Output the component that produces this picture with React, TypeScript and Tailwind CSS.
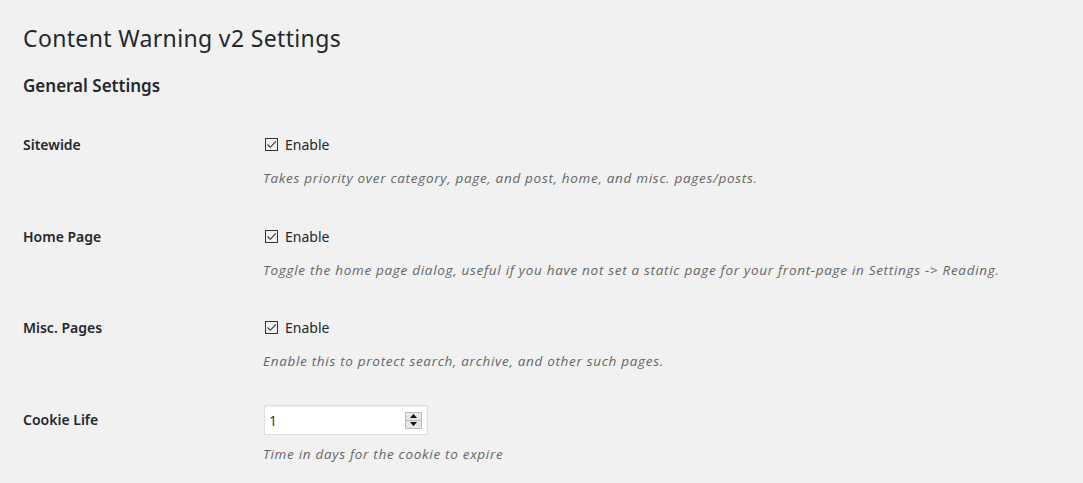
import type { ReactNode } from "react";

const font = { fontFamily: '"Noto Sans", "Open Sans", sans-serif' };
const italic = { fontFamily: '"Open Sans", "Noto Sans", sans-serif' };

function Checkbox() {
  return (
    <span className="inline-flex h-[13px] w-[13px] shrink-0 items-center justify-center border border-[#333] bg-[#f1f1f1]">
      <svg viewBox="0 0 11 11" className="h-[11px] w-[11px]" fill="none" stroke="#333" strokeWidth="1.1">
        <path d="M1.5 5.5 L4.3 8.3 L9.8 2.3" />
      </svg>
    </span>
  );
}

function Row({ label, children, labelClass = "" }: { label: string; children: ReactNode; labelClass?: string }) {
  return (
    <div className="flex">
      <div className={"w-[240px] shrink-0 text-[14px] font-semibold leading-5 text-[#23282d] " + labelClass}>{label}</div>
      <div className="flex-1">{children}</div>
    </div>
  );
}

function Desc({ children, className = "" }: { children: ReactNode; className?: string }) {
  return (
    <p className={"text-[13.5px] italic leading-5 tracking-[0.7px] text-[#666] " + className} style={italic}>
      {children}
    </p>
  );
}

function Enable({ desc }: { desc: string }) {
  return (
    <>
      <label className="flex h-5 items-center gap-[7px] text-[14px] leading-5 text-[#23282d]">
        <span className="ml-[2px]">
          <Checkbox />
        </span>
        Enable
      </label>
      <Desc className="mt-[13px]">{desc}</Desc>
    </>
  );
}

export default function App() {
  return (
    <div className="min-h-[483px] w-full bg-[#f1f1f1] px-[23px] pt-6" style={font}>
      <h1 className="text-[23px] font-normal leading-[29px] tracking-[0.35px] text-[#23282d]">Content Warning v2 Settings</h1>
      <h2 className="mt-[21px] text-[17px] font-semibold leading-6 text-[#23282d]">General Settings</h2>

      <div className="mt-[37px] flex flex-col">
        <Row label="Sitewide">
          <Enable desc="Takes priority over category, page, and post, home, and misc. pages/posts." />
        </Row>
        <div className="mt-[39px]">
          <Row label="Home Page">
            <Enable desc="Toggle the home page dialog, useful if you have not set a static page for your front-page in Settings -> Reading." />
          </Row>
        </div>
        <div className="mt-[38px]">
          <Row label="Misc. Pages">
            <Enable desc="Enable this to protect search, archive, and other such pages." />
          </Row>
        </div>
        <div className="mt-[34px]">
          <Row label="Cookie Life" labelClass="pt-[5px]">
            <div className="ml-[1px] flex h-[30px] w-[164px] items-center justify-between border border-[#ddd] bg-white pl-[4px] pr-[5px] shadow-[inset_0_1px_2px_rgba(0,0,0,0.07)]">
              <span className="text-[14px] text-[#32373c]">1</span>
              <div className="flex h-[17px] w-[17px] flex-col border border-[#bbb] bg-[#e6e6e6]">
                <div className="flex flex-1 items-center justify-center border-b border-[#bbb]">
                  <svg viewBox="0 0 7 4" className="h-[4px] w-[7px]"><path d="M0 4 L3.5 0 L7 4 Z" fill="#111" /></svg>
                </div>
                <div className="flex flex-1 items-center justify-center">
                  <svg viewBox="0 0 7 4" className="h-[4px] w-[7px]"><path d="M0 0 L3.5 4 L7 0 Z" fill="#111" /></svg>
                </div>
              </div>
            </div>
            <Desc className="mt-[9px]">Time in days for the cookie to expire</Desc>
          </Row>
        </div>
      </div>
    </div>
  );
}
